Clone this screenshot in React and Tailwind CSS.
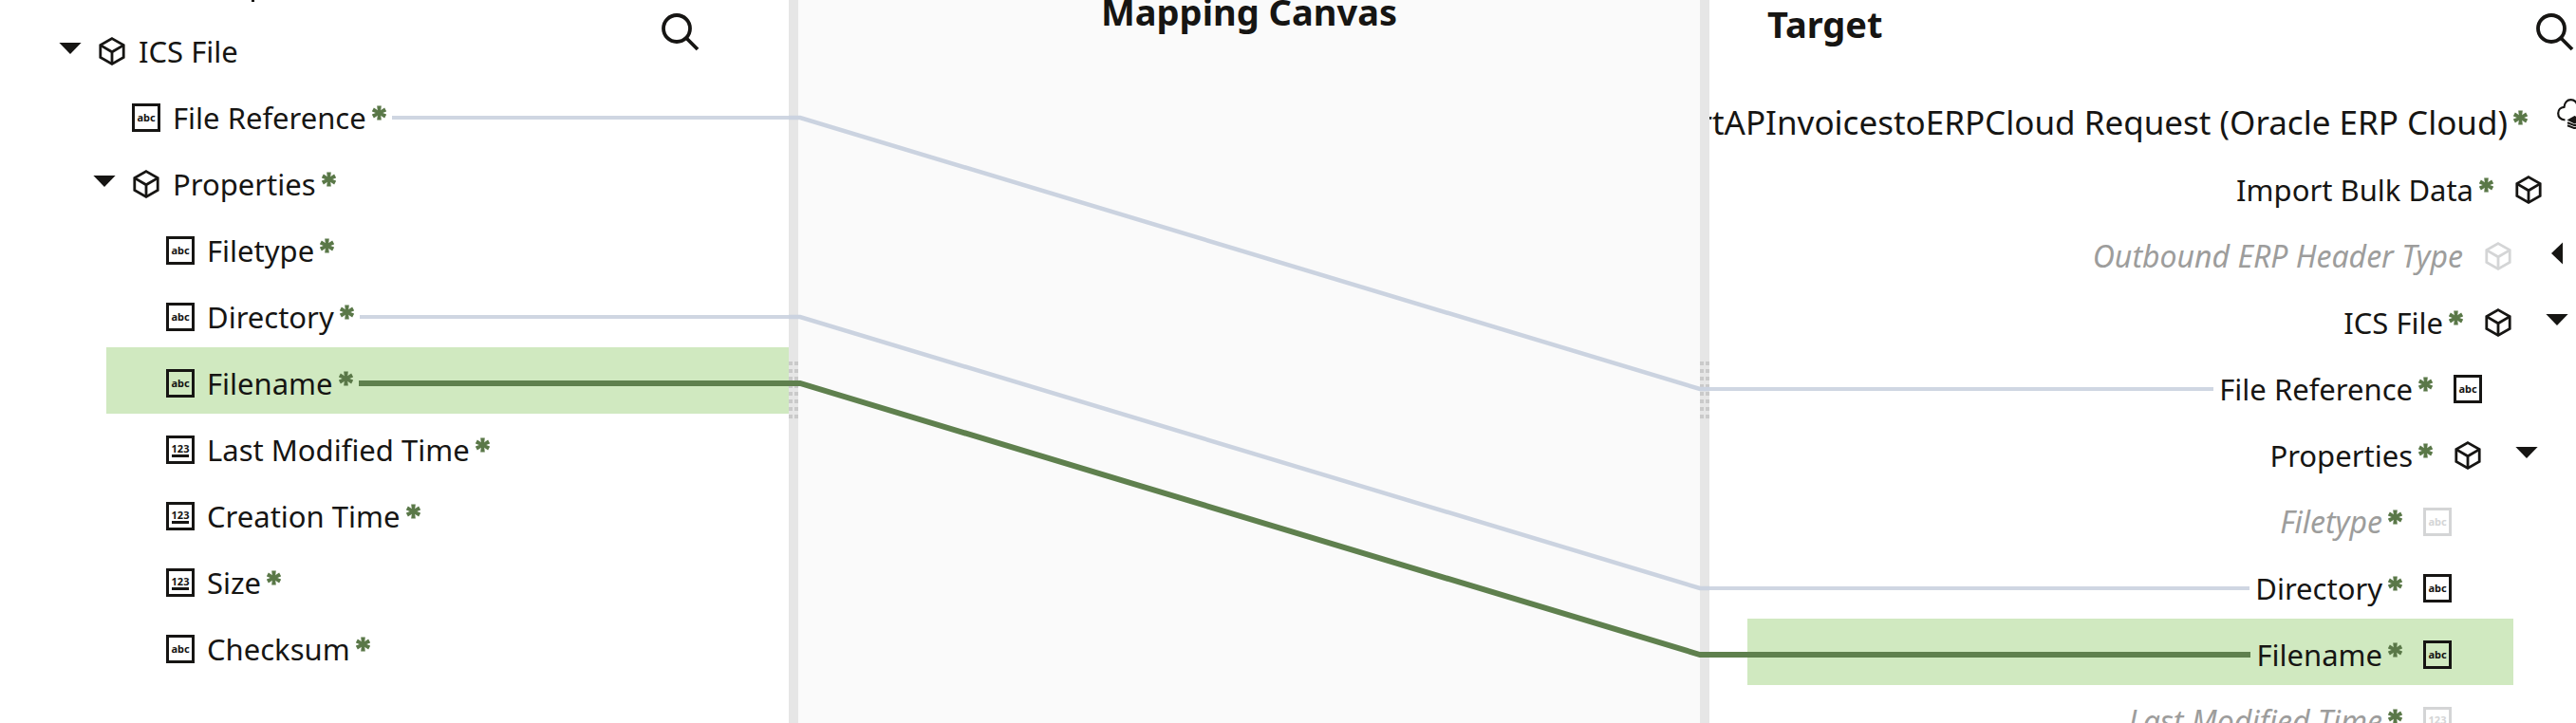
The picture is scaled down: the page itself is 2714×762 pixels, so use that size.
const SOURCE_ROWS = [
  { label: "ICS File", kind: "object", caret: "down", indent: "pl-[62px]" },
  { label: "File Reference", kind: "abc", required: true, line: "blue", indent: "pl-[139px]" },
  { label: "Properties", kind: "object", caret: "down", required: true, indent: "pl-[98px]" },
  { label: "Filetype", kind: "abc", required: true, indent: "pl-[175px]" },
  { label: "Directory", kind: "abc", required: true, line: "blue", indent: "pl-[175px]" },
  { label: "Filename", kind: "abc", required: true, line: "green", indent: "ml-[112px] bg-[#d0e9c0] pl-[63px]" },
  { label: "Last Modified Time", kind: "123", required: true, indent: "pl-[175px]" },
  { label: "Creation Time", kind: "123", required: true, indent: "pl-[175px]" },
  { label: "Size", kind: "123", required: true, indent: "pl-[175px]" },
  { label: "Checksum", kind: "abc", required: true, indent: "pl-[175px]" },
];

const TARGET_ROWS = [
  { label: "Import Bulk Data", kind: "object", required: true, indent: "pr-[35px]" },
  { label: "Outbound ERP Header Type", kind: "object", caret: "left", muted: true, indent: "pr-[8px]" },
  { label: "ICS File", kind: "object", caret: "down", required: true, indent: "pr-[8px]" },
  { label: "File Reference", kind: "abc", required: true, line: "blue", indent: "pr-[99px]" },
  { label: "Properties", kind: "object", caret: "down", required: true, indent: "pr-[40px]" },
  { label: "Filetype", kind: "abc", required: true, muted: true, indent: "pr-[131px]" },
  { label: "Directory", kind: "abc", required: true, line: "blue", indent: "pr-[131px]" },
  { label: "Filename", kind: "abc", required: true, line: "green", selected: true, indent: "pr-[65px]" },
  { label: "Last Modified Time", kind: "123", required: true, muted: true, indent: "pr-[131px]" },
];

function Cube() {
  return (
    <svg viewBox="0 0 30 30" className="size-[30px] shrink-0" fill="none" stroke="currentColor" strokeWidth="2.8" aria-hidden="true">
      <path d="M15 1.6 27.2 8.6V21.4L15 28.4 2.8 21.4V8.6Z" />
      <path d="M2.8 8.6 15 15.8 27.2 8.6M15 15.8V28.4" />
    </svg>
  );
}

function TypeBox({ kind }) {
  return (
    <span className="flex size-[30px] shrink-0 flex-col items-center justify-center border-3 border-current text-[11px] leading-[12px] font-bold" aria-hidden="true">
      {kind}
      {kind === "123" && <span className="h-[3px] w-[18px] bg-current" />}
    </span>
  );
}

function NodeIcon({ kind, muted }) {
  return (
    <span className={muted ? "text-[#d4d5d6]" : "text-[#161513]"}>
      {kind === "object" ? <Cube /> : <TypeBox kind={kind} />}
    </span>
  );
}

function Caret({ direction, label }) {
  return (
    <button type="button" aria-label={"Toggle " + label} aria-expanded={direction === "down"} className="-mt-[6px] size-[24px] shrink-0 text-[#161513]">
      <svg viewBox="0 0 24 24" className="size-[24px]" fill="currentColor" aria-hidden="true">
        {direction === "down" ? <path d="M0.4 6H23.6L12 18Z" /> : <path d="M18 0.4V23.6L6 12Z" />}
      </svg>
    </button>
  );
}

function Required() {
  return (
    <svg viewBox="0 0 15 16" role="img" aria-label="required" className="mb-[10px] h-[16px] w-[15px] shrink-0 text-[#5a7848]" fill="currentColor">
      <path d="M5.2 0.4H9.8L8.9 8 9.8 15.6H5.2L6.1 8Z" />
      <path d="M5.2 0.4H9.8L8.9 8 9.8 15.6H5.2L6.1 8Z" transform="rotate(62 7.5 8)" />
      <path d="M5.2 0.4H9.8L8.9 8 9.8 15.6H5.2L6.1 8Z" transform="rotate(-62 7.5 8)" />
    </svg>
  );
}

function Line({ color }) {
  if (color === "green") return <span className="h-[6px] min-w-0 flex-1 bg-[#5f804e]" />;
  if (color === "blue") return <span className="h-[4px] min-w-0 flex-1 bg-[#cfd6e2]" />;
  return null;
}

function Name({ row, large }) {
  const size = large
    ? "text-[35px] leading-[48px] "
    : row.muted
      ? "text-[32px] leading-[44px] "
      : "text-[31px] leading-[44px] ";
  return (
    <span className="flex shrink-0 items-center gap-[6px] whitespace-nowrap">
      <span className={size + (row.muted ? "text-[#9d9d9c] italic" : "text-[#161513]")}>{row.label}</span>
      {row.required && <Required />}
    </span>
  );
}

function SourceRow({ row }) {
  return (
    <li role="treeitem" className={"flex h-[70px] items-center pt-[6px] " + row.indent}>
      {row.caret && (
        <span className="mr-[17px] flex">
          <Caret direction={row.caret} label={row.label} />
        </span>
      )}
      <NodeIcon kind={row.kind} />
      <span className="mr-[6px] ml-[13px]">
        <Name row={row} />
      </span>
      <Line color={row.line} />
    </li>
  );
}

function TargetRow({ row }) {
  return (
    <li role="treeitem" className={"flex h-[70px] items-center" + (row.selected ? " mr-[66px]" : "")}>
      {row.selected && (
        <span className="flex h-full w-[40px] items-center pt-[6px]">
          <Line color={row.line} />
        </span>
      )}
      <span className={"flex h-full min-w-0 flex-1 items-center justify-end pt-[6px] " + row.indent + (row.selected ? " bg-[#d0e9c0]" : "")}>
        <Line color={row.line} />
        <span className="mr-[22px] ml-[6px]">
          <Name row={row} />
        </span>
        <NodeIcon kind={row.kind} muted={row.muted} />
        {row.caret && (
          <span className="ml-[35px] flex">
            <Caret direction={row.caret} label={row.label} />
          </span>
        )}
      </span>
    </li>
  );
}

function SearchButton({ label }) {
  return (
    <button type="button" aria-label={label} className="size-[40px] text-[#161513]">
      <svg viewBox="0 0 40 40" className="size-[40px]" fill="none" stroke="currentColor" strokeWidth="3.8" aria-hidden="true">
        <circle cx="16" cy="16" r="14" />
        <path d="M26 26 38 38" />
      </svg>
    </button>
  );
}

function CloudStack() {
  return (
    <svg viewBox="0 0 40 32" className="h-[32px] w-[40px] shrink-0 text-[#161513]" aria-hidden="true">
      <path d="M8.500 22.500C4 22 1.200 19.300 1.200 15.500 1.200 11.700 4 9 7.500 8.800 8 4.200 10.800 1.200 14.500 1.200 17.500 1.200 19.800 2.800 21 5.500 26 4 30 7.500 30 12" fill="none" stroke="currentColor" strokeWidth="2.200" />
      <path d="M10.500 22.500 18.500 18 26.500 22.500 18.500 26.500Z" fill="currentColor" />
      <path d="M11 25.300 18.500 28.200 26 25.300M11 28.300 18.500 31.200 26 28.300" fill="none" stroke="currentColor" strokeWidth="2" />
    </svg>
  );
}

function Splitter({ label }) {
  return (
    <div role="separator" aria-orientation="vertical" aria-label={label} className="relative bg-[#e6e6e6]">
      <div className="absolute top-[381px] left-0 grid w-[10px] grid-cols-[4px_4px] justify-between gap-y-[4px]">
        {Array.from({ length: 16 }, (_, i) => (
          <span key={i} className="h-[4px] bg-[#cacaca]" />
        ))}
      </div>
    </div>
  );
}

export default function App() {
  return (
    <main className="grid h-screen grid-cols-[minmax(0,831fr)_10px_minmax(0,950fr)_10px_minmax(0,913fr)] overflow-hidden bg-white font-['Noto_Sans','Open_Sans',sans-serif]">
      <section aria-label="Source" className="relative min-w-0">
        <span className="absolute top-0 left-[265px] h-[2px] w-[3px] bg-[#161513]" />
        <div className="absolute top-[14px] right-[94px]">
          <SearchButton label="Search source" />
        </div>
        <ul role="tree" className="pt-[16px]">
          {SOURCE_ROWS.map((row) => (
            <SourceRow key={row.label} row={row} />
          ))}
        </ul>
      </section>

      <Splitter label="Resize source" />

      <section aria-label="Mapping Canvas" className="relative min-w-0 bg-[#fafafa]">
        <h2 className="-mt-[16px] text-center text-[38px] leading-[56px] font-bold text-[#161513]">Mapping Canvas</h2>
        <svg viewBox="0 0 970 762" preserveAspectRatio="none" className="absolute top-0 -left-[10px] z-10 h-[762px] w-[calc(100%+20px)]" fill="none" aria-hidden="true">
          <path d="M0 124H12L960 410H970" stroke="#cbd3e0" strokeWidth="4.500" />
          <path d="M0 334H12L960 620H970" stroke="#cbd3e0" strokeWidth="4.500" />
          <path d="M0 404H12L960 690H970" stroke="#5f804e" strokeWidth="6" />
        </svg>
      </section>

      <Splitter label="Resize target" />

      <section aria-label="Target" className="min-w-0 overflow-hidden">
        <header className="flex h-[92px] items-start justify-between pr-[2px] pl-[61px]">
          <h2 className="-mt-[3px] text-[38px] leading-[56px] font-bold text-[#161513]">Target</h2>
          <div className="pt-[14px]">
            <SearchButton label="Search target" />
          </div>
        </header>
        <div className="-mr-[20px] flex h-[70px] items-center justify-end">
          <span className="mt-[4px] mr-[31px]">
            <Name large row={{ label: "ImportAPInvoicestoERPCloud Request (Oracle ERP Cloud)", required: true }} />
          </span>
          <span className="-mt-[14px]">
            <CloudStack />
          </span>
        </div>
        <ul role="tree">
          {TARGET_ROWS.map((row) => (
            <TargetRow key={row.label} row={row} />
          ))}
        </ul>
      </section>
    </main>
  );
}
